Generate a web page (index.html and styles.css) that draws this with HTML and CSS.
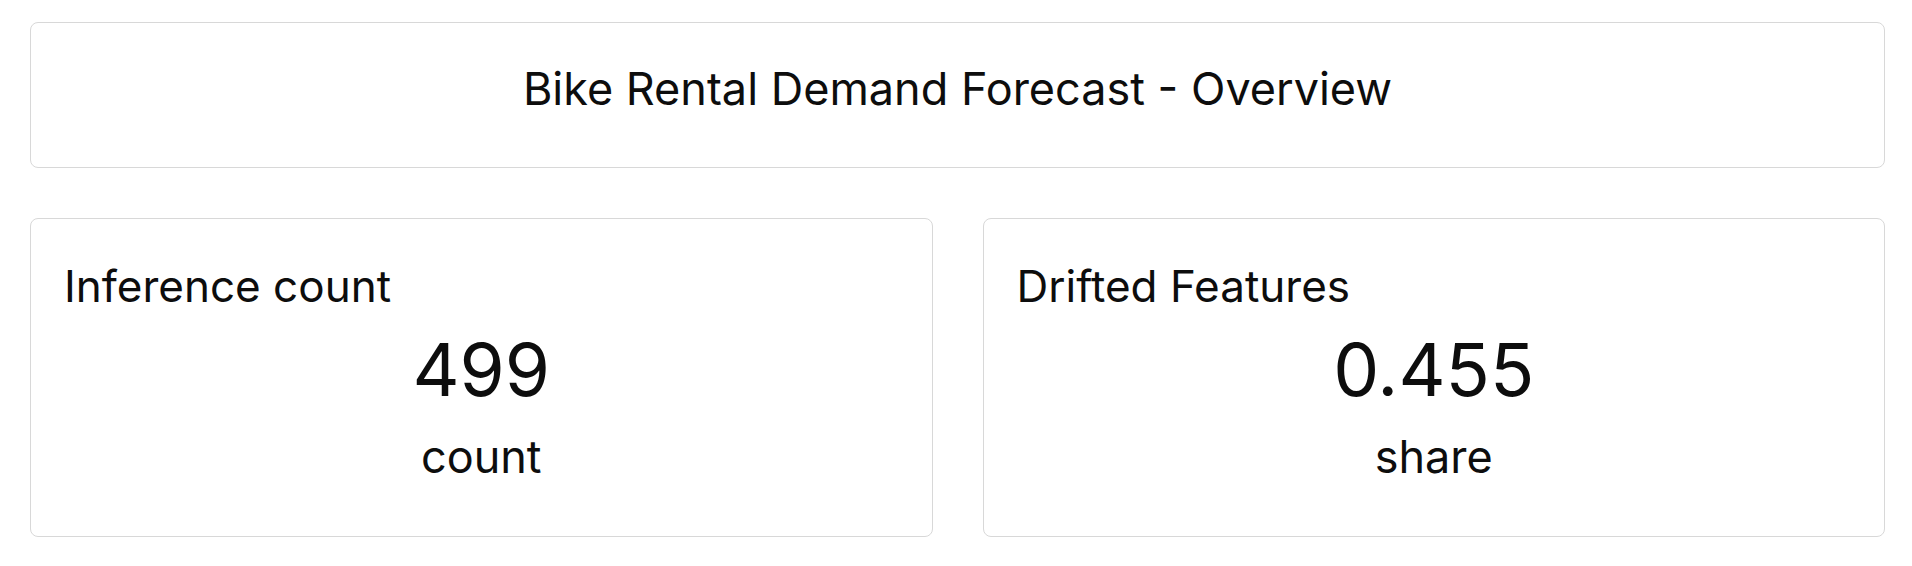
FILE: index.html
```html
<!DOCTYPE html>
<html lang="en">
<head>
<meta charset="utf-8">
<title>Bike Rental Demand Forecast - Overview</title>
<link rel="stylesheet" href="styles.css">
</head>
<body>
<main class="dashboard">
  <section class="card header-card">
    <h1 class="title">Bike Rental Demand Forecast - Overview</h1>
  </section>
  <div class="metrics">
    <section class="card metric-card">
      <h2 class="metric-label">Inference count</h2>
      <div class="metric-value">499</div>
      <div class="metric-unit">count</div>
    </section>
    <section class="card metric-card">
      <h2 class="metric-label">Drifted Features</h2>
      <div class="metric-value">0.455</div>
      <div class="metric-unit">share</div>
    </section>
  </div>
</main>
</body>
</html>
```

FILE: styles.css
```css
html, body {
  margin: 0;
  padding: 0;
  background: #ffffff;
}

body {
  font-family: Inter, "Noto Sans", "Liberation Sans", sans-serif;
  color: #0d0d0d;
}

.dashboard {
  display: flex;
  flex-direction: column;
  gap: 50px;
  padding: 22px 27px 0 30px;
}

.card {
  box-sizing: border-box;
  border: 1px solid #d8d8d8;
  border-radius: 8px;
  background: #ffffff;
}

.header-card {
  height: 146px;
  padding-top: 39px;
  text-align: center;
}

.title {
  margin: 0;
  font-size: 45px;
  font-weight: 400;
  line-height: 54px;
}

.metrics {
  display: grid;
  grid-template-columns: 1fr 1fr;
  gap: 50px;
}

.metric-card {
  height: 319px;
  padding: 40px 33px 0 33px;
  display: flex;
  flex-direction: column;
}

.metric-label {
  margin: 0;
  font-size: 44px;
  font-weight: 400;
  line-height: 54px;
}

.metric-value {
  margin-top: 14px;
  text-align: center;
  font-size: 73px;
  line-height: 85px;
}

.metric-unit {
  margin-top: 18px;
  text-align: center;
  font-size: 45px;
  line-height: 54px;
}
```
